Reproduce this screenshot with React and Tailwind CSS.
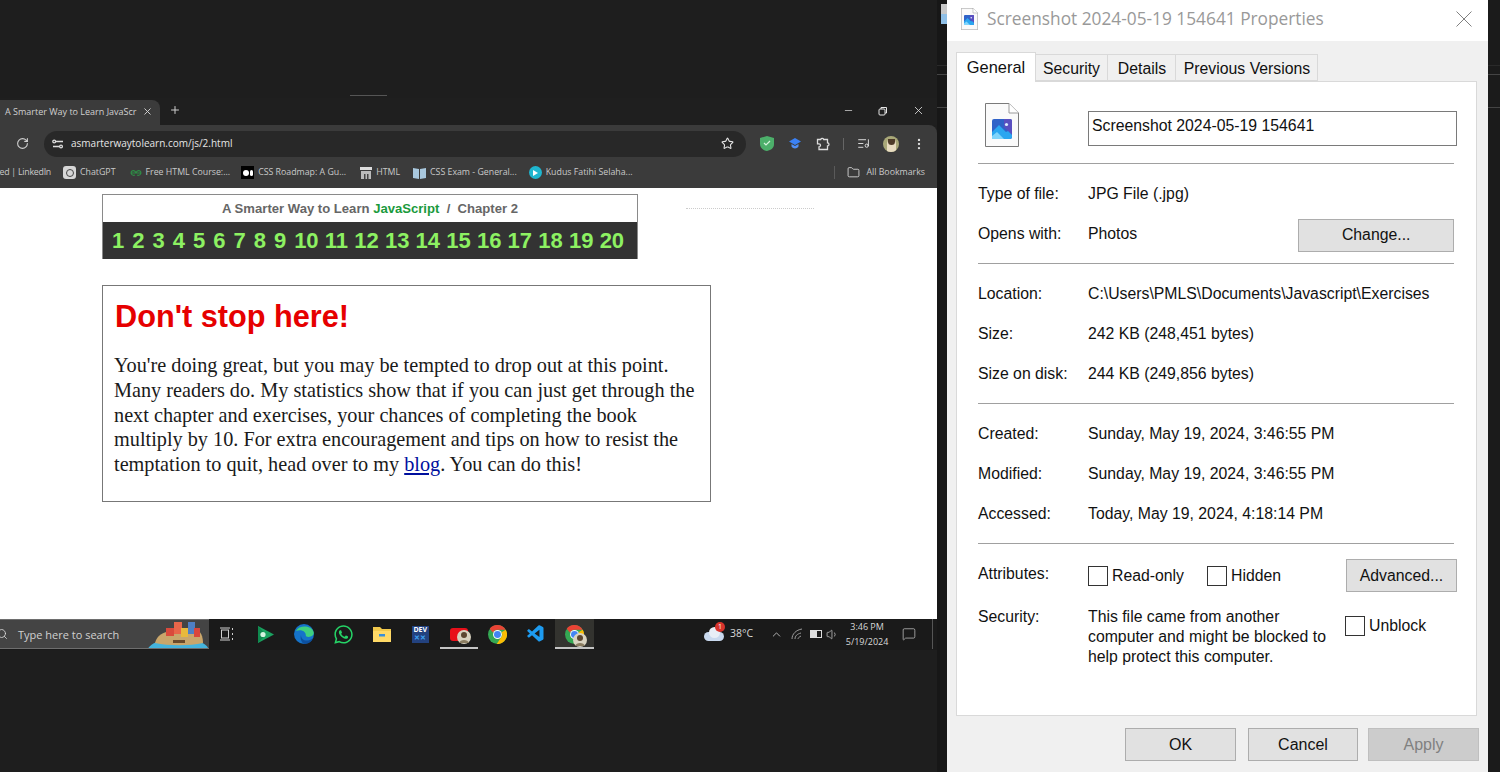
import { ChevronUp, Plus, RotateCw, Star, X, Minus, EllipsisVertical, Folder, Search, Volume1, MessageSquare, ListMusic } from 'lucide-react';
import { FaWhatsapp } from 'react-icons/fa';
import { VscVscode } from 'react-icons/vsc';

const SANS = "font-['Liberation_Sans',Arial,sans-serif]";

// little picture file icon used by the title bar and the General tab
function PictureGlyph({ size }) {
    return (
        <svg width={size} height={size} viewBox="0 0 20 20" className="block">
            <rect width="20" height="20" rx="2" fill="#2f62c8" />
            <path d="M12 0h6a2 2 0 0 1 2 2v14L12 8z" fill="#5a4fc0" />
            <path d="M0 20V13L7 6l7 7 2-1 4 4v2a2 2 0 0 1-2 2z" fill="#2aa6f0" />
            <path d="M0 20v-3l5-4 7 7z" fill="#7fd4fb" />
            <circle cx="14.5" cy="5.5" r="1.6" fill="#dbeeff" />
        </svg>
    );
}

function FileIcon({ w, h, glyph }) {
    return (
        <div className="relative" style={{ width: w, height: h }}>
            <svg width={w} height={h} viewBox="0 0 34 44" className="block">
                <path d="M.5.5H24L33.5 10V43.5H.5z" fill="#fafafa" stroke="#7a7a7a" />
                <path d="M24 .5V10H33.5" fill="#fff" stroke="#9a9a9a" />
            </svg>
            <div className="absolute left-[20%] top-[36%]">
                <PictureGlyph size={glyph} />
            </div>
        </div>
    );
}

function ChromeLogo({ size = 18 }) {
    return (
        <svg width={size} height={size} viewBox="0 0 24 24">
            <circle cx="12" cy="12" r="12" fill="#34a853" />
            <path d="M12 0a12 12 0 0 1 10.4 6H12a6 6 0 0 0-5.6 3.8L2.2 4.6A12 12 0 0 1 12 0z" fill="#ea4335" />
            <path d="M22.4 6A12 12 0 0 1 11 24l5.2-7.8A6 6 0 0 0 17.2 9z" fill="#fbbc05" />
            <circle cx="12" cy="12" r="5.6" fill="#fff" />
            <circle cx="12" cy="12" r="4.4" fill="#4285f4" />
        </svg>
    );
}

function AvatarBadge() {
    return (
        <svg width="14" height="14" viewBox="0 0 14 14" className="absolute right-[-3px] bottom-[-3px]">
            <circle cx="7" cy="7" r="7" fill="#d8d2c0" />
            <circle cx="7" cy="5" r="3" fill="#5b4630" />
            <path d="M2 13c1-4 9-4 10 0z" fill="#8a7c60" />
        </svg>
    );
}

function TaskIcon({ children, active, underline }) {
    return (
        <div className={`w-[38.6px] h-[30px] flex items-center justify-center relative ${active ? 'bg-[#33332f]' : ''}`}>
            {children}
            {underline && <div className="absolute bottom-0 left-0 right-0 h-[2px] bg-[#c4c4c4]" />}
        </div>
    );
}

function Bookmark({ icon, label, className = '' }) {
    return (
        <div className={`flex items-center gap-[4px] shrink-0 ${className}`}>
            {icon}
            <span>{label}</span>
        </div>
    );
}

function Row({ label, children }) {
    return (
        <div className="flex items-center h-[40px] pt-[2px]">
            <div className="w-[110px] shrink-0">{label}</div>
            <div>{children}</div>
        </div>
    );
}

function Divider({ className = '' }) {
    return <div className={`h-px bg-[#a0a0a0] w-[476px] ${className}`} />;
}

function Check() {
    return <div className="w-[20px] h-[20px] bg-white border border-[#333] shrink-0" />;
}

function WinButton({ children, className = '' }) {
    return (
        <div className={`h-[33px] flex items-center justify-center bg-[#e1e1e1] border border-[#adadad] ${className}`}>
            {children}
        </div>
    );
}

function Browser() {
    return (
        <div className="w-[937px]">
            {/* Tab strip */}
            <div className="h-[27px] bg-[#1f1f1f] flex items-end">
                <div className="w-[160px] h-[25px] bg-[#3b3b3b] rounded-tr-[8px] flex items-center pl-[5px] pb-[2px] text-[9px] text-[#d0d0d0]">
                    <span className="w-[129px] whitespace-nowrap">A Smarter Way to Learn JavaScr</span>
                    <X size={11} className="text-[#d8d8d8] ml-[8px]" strokeWidth={2} />
                </div>
                <Plus size={12} className="text-[#cfcfcf] ml-[9px] mb-[9px]" strokeWidth={2} />
                <div className="ml-auto flex items-center mb-[8px] mr-[12px] text-[#e5e5e5]">
                    <Minus size={11} strokeWidth={1.5} />
                    <svg width="10" height="10" viewBox="0 0 10 10" fill="none" stroke="currentColor" className="ml-[24px]">
                        <rect x="1" y="3" width="6" height="6" rx="1" />
                        <path d="M3 3V1.5h5.5V7H7" />
                    </svg>
                    <X size={13} strokeWidth={1.5} className="ml-[24px]" />
                </div>
            </div>
            {/* Address row */}
            <div className="h-[35px] flex items-center pl-[16px] pr-[10px] pt-[2px] bg-[#3b3b3b] rounded-tr-[8px]">
                <RotateCw size={13} className="text-[#cfcfcf]" strokeWidth={2} />
                <div className="ml-[15px] w-[702px] h-[26px] rounded-full bg-[#282828] flex items-center pl-[8px] pr-[12px]">
                    <svg width="12" height="10" viewBox="0 0 12 10" fill="none" stroke="#ddd" strokeWidth="1.3">
                        <path d="M4 2.5h7M1 7.5h6" />
                        <circle cx="2.2" cy="2.5" r="1.4" />
                        <circle cx="9" cy="7.5" r="1.4" />
                    </svg>
                    <span className="ml-[7px] text-[10px] text-[#e6e6e6]">asmarterwaytolearn.com/js/2.html</span>
                    <Star size={13} className="ml-auto text-[#e6e6e6]" strokeWidth={2} />
                </div>
                <svg width="14" height="15" viewBox="0 0 14 15" className="ml-[14px]">
                    <path d="M7 0 14 2v6c0 4-3 6-7 7-4-1-7-3-7-7V2z" fill="#4caf6a" />
                    <path d="M4 7l2 2 4-4" fill="none" stroke="#d4f3dc" strokeWidth="1.2" />
                </svg>
                <svg width="12" height="11" viewBox="0 0 12 11" className="ml-[15px]">
                    <path d="M6 0l6 3.5L6 7 0 3.5z" fill="#3b82f6" />
                    <path d="M2.5 6v2.5C4 11 8 11 9.5 8.5V6L6 8z" fill="#4f8ff7" />
                </svg>
                <svg width="14" height="14" viewBox="0 0 14 14" fill="none" stroke="#dcdcdc" strokeWidth="1.3" className="ml-[15px]">
                    <path d="M1.5 2.5h3.2a1.6 1.6 0 0 1 3 0h3.8v3.4a1.5 1.5 0 0 1 0 3v3.6H3V9.8a1.5 1.5 0 0 0 0-3H1.5z" />
                </svg>
                <div className="w-px h-[12px] bg-[#666] ml-[13px]" />
                <ListMusic size={13} className="ml-[13px] text-[#dcdcdc]" strokeWidth={1.8} />
                <div className="ml-[13px] w-[16px] h-[16px] rounded-full bg-[#a9a878] overflow-hidden flex items-end justify-center">
                    <div className="w-[9px] h-[13px] rounded-t-full bg-[#e8dcc0] flex justify-center">
                        <div className="w-[7px] h-[6px] rounded-b-full bg-[#4e3b28]" />
                    </div>
                </div>
                <EllipsisVertical size={14} className="ml-[13px] text-[#dcdcdc]" strokeWidth={2} />
            </div>
            {/* Bookmarks row */}
            <div className="h-[28px] flex items-center text-[8.8px] text-[#c9c9c9] whitespace-nowrap pr-[12px] pb-[3px] bg-[#3b3b3b]">
                <div className="w-[51px] flex justify-end shrink-0"><span className="shrink-0 tracking-[-0.25px]">ed | LinkedIn</span></div>
                <Bookmark
                    className="ml-[12px]"
                    label="ChatGPT"
                    icon={<div className="w-[13px] h-[13px] rounded-[3px] bg-[#d6d6d6] flex items-center justify-center"><div className="w-[8px] h-[8px] rounded-full border border-[#444]" /></div>}
                />
                <Bookmark
                    className="ml-[14px]"
                    label="Free HTML Course:..."
                    icon={<svg width="12" height="8" viewBox="0 0 12 8" fill="none" stroke="#2f8d46" strokeWidth="1.2"><path d="M1 4h10M6 4C5 1 2 1 1.2 3 .6 5 2.5 7 5 6M6 4c1-3 4-3 4.8-1 .6 2-1.3 4-3.8 3" /></svg>}
                />
                <Bookmark
                    className="ml-[11px]"
                    label="CSS Roadmap: A Gu..."
                    icon={<div className="w-[13px] h-[13px] bg-black flex items-center justify-center gap-px"><div className="w-[6px] h-[6px] rounded-full bg-white" /><div className="w-[3px] h-[6px] rounded-full bg-white" /></div>}
                />
                <Bookmark
                    className="ml-[14px]"
                    label="HTML"
                    icon={<svg width="12" height="12" viewBox="0 0 12 12"><path d="M0 0h12v3H0z" fill="#ddd" /><path d="M1 4h10v8H1z" fill="#bbb" /><path d="M4 7h1.5v5H4zM7 7h1.5v5H7z" fill="#444" /></svg>}
                />
                <Bookmark
                    className="ml-[13px]"
                    label="CSS Exam - General..."
                    icon={<svg width="13" height="12" viewBox="0 0 13 12"><path d="M0 1l6 1v10l-6-1zM13 1L7 2v10l6-1z" fill="#a9c8de" /></svg>}
                />
                <Bookmark
                    className="ml-[12px]"
                    label="Kudus Fatihi Selaha..."
                    icon={<div className="w-[13px] h-[13px] rounded-full bg-[#1fb6cf] flex items-center justify-center"><div className="w-0 h-0 border-y-[3px] border-y-transparent border-l-[5px] border-l-white ml-px" /></div>}
                />
                <div className="ml-auto w-px h-[13px] bg-[#5a5a5a]" />
                <Folder size={13} className="ml-[12px] text-[#dcdcdc]" strokeWidth={1.6} />
                <span className="ml-[6px]">All Bookmarks</span>
            </div>
        </div>
    );
}

function WebPage() {
    return (
        <div className={`w-[937px] h-[431px] bg-white pt-[6px] pl-[102px] ${SANS}`}>
            <div className="relative w-[536px] border border-[#8a8a8a] border-b-0">
                <div className="h-[27px] flex items-center justify-center text-[13.1px] font-bold text-[#666]">
                    <span>A Smarter Way to Learn <span className="text-[#1a9a3c]">JavaScript</span>&nbsp; /&nbsp; Chapter 2</span>
                </div>
                <div className="h-[37px] bg-[#333] flex items-center justify-center pr-[4px] text-[22px] font-bold text-[#8df162] whitespace-nowrap">
                    {Array.from({ length: 20 }, (_, i) => (
                        <span key={i} className={i === 19 ? '' : i < 9 ? 'mr-[8px]' : 'mr-[6.2px]'}>{i + 1}</span>
                    ))}
                </div>
                <div className="absolute left-[583px] top-[13px] w-[128px] border-t border-dotted border-[#ccc]" />
            </div>
            <div className="mt-[26px] w-[609px] h-[217px] border border-[#777] pl-[12px]">
                <h1 className="mt-[12px] text-[30.7px] leading-[38px] font-bold text-[#e60000]">Don't stop here!</h1>
                <p className="mt-[17px] ml-[-1px] text-[20.25px] leading-[24.8px] text-[#1a1a1a] whitespace-nowrap font-['Liberation_Serif',serif]">
                    You're doing great, but you may be tempted to drop out at this point.<br />
                    Many readers do. My statistics show that if you can just get through the<br />
                    next chapter and exercises, your chances of completing the book<br />
                    multiply by 10. For extra encouragement and tips on how to resist the<br />
                    temptation to quit, head over to my <span className="text-[#00109e] underline">blog</span>. You can do this!
                </p>
            </div>
        </div>
    );
}

function Taskbar() {
    return (
        <div className="w-[937px] h-[31px] bg-[#1a1a1a] flex text-[#d8d8d8] whitespace-nowrap">
            <div className="w-[209px] h-[30px] relative bg-[#444] border-t border-b border-[#6e6e6e] flex items-center overflow-hidden shrink-0">
                <Search size={12} className="ml-[-4px] text-[#ddd]" strokeWidth={1.6} />
                <span className="ml-[10px] mt-[2px] text-[11px] text-[#d0d0d0]">Type here to search</span>
                <svg width="62" height="30" viewBox="0 0 62 30" className="absolute right-0 top-0">
                    <path d="M0 30C4 23 10 21 18 21h26c10 0 16 3 18 9z" fill="#45b4dd" />
                    <path d="M8 23C10 15 16 12 24 11l24-1c6 0 8 7 8 13-14 3-34 3-48 0z" fill="#c9a66b" />
                    <rect x="19" y="8" width="8" height="8" fill="#d94a3c" />
                    <rect x="27" y="2" width="8" height="12" fill="#e8664a" />
                    <rect x="34" y="8" width="7" height="9" fill="#e8b93c" />
                    <rect x="41" y="2" width="7" height="12" fill="#4e7fc4" />
                    <rect x="47" y="8" width="6" height="9" fill="#d9463c" />
                    <rect x="26" y="20" width="12" height="3" fill="#6b4a2a" />
                </svg>
            </div>
            <div className="flex ml-[-1px]">
                <TaskIcon>
                    <svg width="14" height="14" viewBox="0 0 14 14" fill="none" stroke="#cfcfcf">
                        <rect x="1.5" y="3" width="7" height="8" />
                        <path d="M0 1h10M0 13h10M12.5 1v2M12.5 6v2M12.5 11v2" />
                    </svg>
                </TaskIcon>
                <TaskIcon>
                    <svg width="16" height="17" viewBox="0 0 16 17">
                        <path d="M0 0l16 8.5L0 17z" fill="#1aa260" />
                        <path d="M0 0l8 8.5L0 17z" fill="#0f8a4f" />
                        <circle cx="5" cy="8.5" r="2.6" fill="#d5f5e0" />
                    </svg>
                </TaskIcon>
                <TaskIcon>
                    <svg width="20" height="20" viewBox="0 0 20 20">
                        <circle cx="10" cy="10" r="10" fill="#1573c9" />
                        <path d="M2 7C5 1 17 1 19.6 8c.8 3-1.6 5-5 5-2 0-3-.8-2.8-1.6C12 8 8 5 2 7z" fill="#3fd07f" />
                        <path d="M7 11c0 5 6 8 12 3-1 3-4 6-9 6-3-2-4-6-3-9z" fill="#0c4f9e" />
                    </svg>
                </TaskIcon>
                <TaskIcon><FaWhatsapp size={21} color="#25d366" /></TaskIcon>
                <TaskIcon>
                    <svg width="18" height="16" viewBox="0 0 18 16">
                        <path d="M0 1h7l2 2h9v13H0z" fill="#f2c94c" />
                        <path d="M0 5h18v11H0z" fill="#ffd966" />
                        <rect x="6" y="8" width="6" height="2.5" fill="#3b8fd9" />
                    </svg>
                </TaskIcon>
                <TaskIcon>
                    <div className="w-[17px] h-[17px] bg-[#23427f] flex flex-col items-center text-[7px] font-bold leading-[8px] text-white">
                        <span>DEV</span>
                        <span className="text-[#3ea0f0]">✕✕</span>
                    </div>
                </TaskIcon>
                <TaskIcon underline>
                    <div className="relative w-[18px] h-[13px] bg-[#e8101a] rounded-[3px]">
                        <AvatarBadge />
                    </div>
                </TaskIcon>
                <TaskIcon><ChromeLogo size={19} /></TaskIcon>
                <TaskIcon><VscVscode size={20} color="#1d9bf0" /></TaskIcon>
                <TaskIcon active underline>
                    <div className="relative">
                        <ChromeLogo size={19} />
                        <AvatarBadge />
                    </div>
                </TaskIcon>
            </div>
            {/* System tray */}
            <div className="ml-[110px] flex items-center h-[30px] text-[10.5px]">
                <div className="relative w-[20px] h-[14px]">
                    <div className="absolute bottom-0 left-0 w-[20px] h-[9px] rounded-full bg-[#c9d9ee]" />
                    <div className="absolute bottom-[3px] left-[5px] w-[11px] h-[11px] rounded-full bg-[#e8eef6]" />
                    <div className="absolute top-[-5px] right-[-1px] w-[10px] h-[10px] rounded-full bg-[#d8342c] text-[7px] leading-[10px] text-center text-white">1</div>
                </div>
                <span className="ml-[6px]">38°C</span>
                <ChevronUp size={13} className="ml-[17px] text-[#cfcfcf]" strokeWidth={1.5} />
                <svg width="12" height="12" viewBox="0 0 12 12" fill="none" stroke="#9a9a9a" className="ml-[8px]">
                    <path d="M1 11C1 6 5 2 11 1M4 11c0-3 2-5 6-6M7 11c0-1 1-2 3-3" />
                </svg>
                <div className="ml-[7px] w-[12px] h-[8px] border border-[#ddd] flex"><div className="w-[6px] bg-[#ddd]" /></div>
                <Volume1 size={13} className="ml-[4px] text-[#bbb]" strokeWidth={1.5} />
                <div className="ml-[4px] w-[48px] text-center text-[9px] leading-[15px] text-[#d8d8d8]">
                    <div>3:46 PM</div>
                    <div>5/19/2024</div>
                </div>
                <MessageSquare size={14} className="ml-[11px] text-[#cfcfcf]" strokeWidth={1.2} />
                <div className="ml-[16px] w-px h-[30px] bg-[#555]" />
            </div>
        </div>
    );
}

function PropertiesDialog() {
    return (
        <div className={`w-[541px] h-[772px] bg-[#f0f0f0] shrink-0 flex flex-col text-[15.8px] leading-[20px] text-[#111] ${SANS}`}>
            <div className="h-[41px] bg-white flex items-center pl-[14px] pr-[16px] pb-[4px] shrink-0">
                <FileIcon w={17} h={22} glyph={10} />
                <span className="ml-[9px] text-[17.3px] text-[#999] font-['Open_Sans',sans-serif]">Screenshot 2024-05-19 154641 Properties</span>
                <svg width="16" height="16" viewBox="0 0 16 16" stroke="#808080" className="ml-auto">
                    <path d="M.5.5l15 15M15.5.5l-15 15" />
                </svg>
            </div>
            {/* Tabs */}
            <div className="flex items-end h-[40px] pl-[9px] shrink-0">
                <div className="w-[80px] h-[30px] bg-white border border-[#d9d9d9] border-b-0 flex items-center justify-center relative z-10 mb-[-1px] text-[16.4px] pb-[2px]">General</div>
                <div className="w-[72px] h-[27px] bg-[#f0f0f0] border-y border-r border-[#d9d9d9] flex items-center justify-center pt-[3px]">Security</div>
                <div className="w-[68px] h-[27px] bg-[#f0f0f0] border-y border-r border-[#d9d9d9] flex items-center justify-center pt-[3px] pl-[1px]">Details</div>
                <div className="w-[142px] h-[27px] bg-[#f0f0f0] border-y border-r border-[#d9d9d9] flex items-center justify-center pt-[3px] pl-[1px]">Previous Versions</div>
            </div>
            <div className="ml-[9px] w-[521px] h-[635px] bg-white border border-[#d9d9d9] pl-[21px] shrink-0">
                <div className="flex h-[81px]">
                    <div className="w-[110px] pt-[21px] pl-[7px]">
                        <FileIcon w={34} h={44} glyph={20} />
                    </div>
                    <div className="mt-[29px] w-[369px] h-[35px] border border-[#7a7a7a] flex items-center pl-[3px] pb-[5px]">Screenshot 2024-05-19 154641</div>
                </div>
                <Divider className="mb-[9px]" />
                <Row label="Type of file:">JPG File (.jpg)</Row>
                <div className="flex items-center h-[40px]">
                    <div className="w-[110px] shrink-0 pt-[2px]">Opens with:</div>
                    <div className="pt-[2px]">Photos</div>
                    <WinButton className="ml-[161px] w-[156px] mt-[4px]">Change...</WinButton>
                </div>
                <Divider className="mt-[10px] mb-[9px]" />
                <Row label="Location:">C:\Users\PMLS\Documents\Javascript\Exercises</Row>
                <Row label="Size:">242 KB (248,451 bytes)</Row>
                <Row label="Size on disk:">244 KB (249,856 bytes)</Row>
                <Divider className="mt-[10px] mb-[9px]" />
                <Row label="Created:">Sunday, May 19, 2024, 3:46:55 PM</Row>
                <Row label="Modified:">Sunday, May 19, 2024, 3:46:55 PM</Row>
                <Row label="Accessed:">Today, May 19, 2024, 4:18:14 PM</Row>
                <Divider className="mt-[10px] mb-[15px]" />
                <div className="flex h-[33px]">
                    <div className="w-[110px] shrink-0 pt-[5px]">Attributes:</div>
                    <div className="flex items-center gap-[4px] pt-[1px]"><Check />Read-only</div>
                    <div className="flex items-center gap-[4px] pt-[1px] ml-[23px]"><Check />Hidden</div>
                    <div className="ml-auto mr-[19px]"><WinButton className="w-[111px]">Advanced...</WinButton></div>
                </div>
                <div className="flex mt-[15px]">
                    <div className="w-[110px] shrink-0">Security:</div>
                    <div className="w-[257px]">This file came from another computer and might be blocked to help protect this computer.</div>
                    <div className="flex items-center gap-[4px] h-[20px] mt-[9px]"><Check />Unblock</div>
                </div>
            </div>
            <div className="flex mt-[12px] pl-[178px] text-[16px]">
                <WinButton className="w-[111px]">OK</WinButton>
                <WinButton className="w-[110px] ml-[12px]">Cancel</WinButton>
                <WinButton className="w-[111px] ml-[10px] !bg-[#cccccc] !border-[#bfbfbf] text-[#808080]">Apply</WinButton>
            </div>
        </div>
    );
}

// thin strip of whatever window sits behind the dialog
function BehindStrip({ className = '', children }) {
    return <div className={`relative shrink-0 h-[772px] ${className}`}>{children}</div>;
}

function StripLines() {
    return (
        <>
            <div className="absolute top-[65px] inset-x-0 h-px bg-[#2a2a2a]" />
            <div className="absolute top-[74px] inset-x-0 h-px bg-[#444]" />
            <div className="absolute top-[107px] inset-x-0 h-px bg-[#444]" />
        </>
    );
}

export default function App() {
    return (
        <div className="w-[1500px] h-[772px] overflow-hidden flex bg-[#1e1e1e] font-['Open_Sans',sans-serif]">
            <div className="w-[937px] shrink-0">
                <div className="h-[96px] pl-[350px] flex items-end">
                    <div className="w-[37px] h-px bg-[#555]" />
                </div>
                <div className="h-[2px]" />
                <Browser />
                <WebPage />
                <Taskbar />
            </div>
            <BehindStrip className="w-[10px] bg-[#171717]">
                <StripLines />
                <div className="absolute left-[4px] top-[4px] w-[6px] h-[10px] bg-[#c8c8c8]" />
                <div className="absolute left-[4px] top-[14px] w-[6px] h-[10px] bg-[#8fbfe6]" />
            </BehindStrip>
            <PropertiesDialog />
            <BehindStrip className="w-[12px] bg-[#1b1b1b]">
                <StripLines />
            </BehindStrip>
        </div>
    );
}
